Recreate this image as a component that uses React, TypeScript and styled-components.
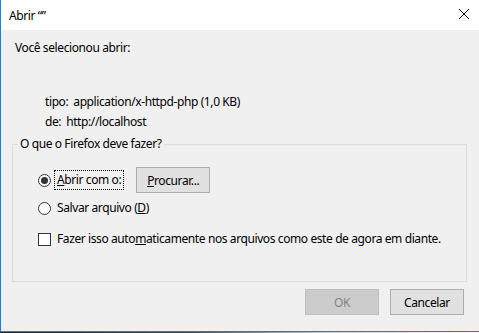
import styled, { createGlobalStyle } from 'styled-components'

const GlobalStyle = createGlobalStyle`
  html, body {
    margin: 0;
    padding: 0;
    background: #1d2a36;
  }
  body {
    font-family: 'Noto Sans', 'Open Sans', sans-serif;
    font-size: 12px;
    letter-spacing: -0.4px;
    color: #000;
  }
`

const Screen = styled.div`
  width: 479px;
  height: 333px;
  display: flex;
  flex-direction: column;
  overflow: hidden;
  background: linear-gradient(90deg, #1a2530 0%, #3a4a58 40%, #cfd8e0 70%, #f4f6f8 100%);
`

const Window = styled.div`
  height: 332px;
  display: flex;
  flex-direction: column;
  border-left: 1px solid #1f7fd4;
  border-bottom: 1px solid #1f7fd4;
  background: #f0f0f0;
  box-sizing: border-box;
`

const TitleBar = styled.div`
  height: 30px;
  flex: none;
  display: flex;
  align-items: center;
  justify-content: space-between;
  background: #fff;
  padding-left: 8px;
`

const Title = styled.span`
  font-size: 12px;
`

const CloseButton = styled.span`
  width: 30px;
  display: flex;
  justify-content: center;
  align-items: center;
  margin-top: -2px;
`

const Body = styled.div`
  flex: 1;
  display: flex;
  flex-direction: column;
  padding: 10px 12px 0 11px;
`

const Intro = styled.div`
  line-height: 16px;
  padding-left: 3px;
`

const Info = styled.div`
  margin-top: 36px;
  padding-left: 33px;
  display: flex;
  flex-direction: column;
`

const InfoRow = styled.div`
  display: flex;
  gap: 5px;
  line-height: 20px;
`

const GroupBox = styled.fieldset`
  margin: 4px 0 0;
  padding: 0;
  height: 146px;
  box-sizing: border-box;
  border: 1px solid #dcdcdc;
  min-width: 0;
`

const GroupLabel = styled.legend`
  padding: 0 2px;
  margin-left: 5px;
  line-height: 16px;
`

const Options = styled.div`
  display: flex;
  flex-direction: column;
  padding: 15px 0 0 25px;
`

const OptionRow = styled.div<{ $gap?: number }>`
  display: flex;
  align-items: center;
  height: 26px;
  margin-top: ${(p) => p.$gap ?? 0}px;
`

const Radio = styled.span<{ $checked?: boolean }>`
  width: 13px;
  height: 13px;
  border: 1px solid #333;
  border-radius: 50%;
  box-sizing: border-box;
  background: #fff;
  display: flex;
  align-items: center;
  justify-content: center;
  flex: none;

  &::after {
    content: '';
    width: 7px;
    height: 7px;
    border-radius: 50%;
    background: ${(p) => (p.$checked ? '#333' : 'transparent')};
  }
`

const Checkbox = styled.span`
  width: 13px;
  height: 13px;
  border: 1px solid #333;
  box-sizing: border-box;
  background: #fff;
  flex: none;
`

const Label = styled.span<{ $focused?: boolean }>`
  margin-left: ${(p) => (p.$focused ? '3px' : '6px')};
  padding: ${(p) => (p.$focused ? '1px 2px' : '0')};
  border: ${(p) => (p.$focused ? '1px dotted #000' : 'none')};
  line-height: 16px;
  white-space: nowrap;
`

const U = styled.span`
  text-decoration: underline;
`

const Button = styled.button<{ $disabled?: boolean }>`
  width: 74px;
  height: 26px;
  box-sizing: border-box;
  font-family: inherit;
  font-size: 12px;
  letter-spacing: inherit;
  padding: 0;
  background: ${(p) => (p.$disabled ? '#cccccc' : '#e1e1e1')};
  border: 1px solid ${(p) => (p.$disabled ? '#bfbfbf' : '#adadad')};
  color: ${(p) => (p.$disabled ? '#838383' : '#000')};
`

const BrowseButton = styled(Button)`
  margin-left: 12px;
`

const Footer = styled.div`
  display: flex;
  justify-content: flex-end;
  gap: 11px;
  margin-top: 7px;
  padding-right: 3px;
`

function CloseIcon() {
  return (
    <svg width="12" height="12" viewBox="0 0 12 12">
      <path d="M1 1 L11 11 M11 1 L1 11" stroke="#000" strokeWidth="1" />
    </svg>
  )
}

export default function App() {
  return (
    <>
      <GlobalStyle />
      <Screen>
        <Window>
          <TitleBar>
            <Title>Abrir “”</Title>
            <CloseButton>
              <CloseIcon />
            </CloseButton>
          </TitleBar>
          <Body>
            <Intro>Você selecionou abrir:</Intro>
            <Info>
              <InfoRow>
                <span>tipo:</span>
                <span>application/x-httpd-php (1,0 KB)</span>
              </InfoRow>
              <InfoRow>
                <span>de:</span>
                <span>http://localhost</span>
              </InfoRow>
            </Info>
            <GroupBox>
              <GroupLabel>O que o Firefox deve fazer?</GroupLabel>
              <Options>
                <OptionRow>
                  <Radio $checked />
                  <Label $focused>
                    <U>A</U>brir com o:
                  </Label>
                  <BrowseButton>
                    <U>P</U>rocurar...
                  </BrowseButton>
                </OptionRow>
                <OptionRow $gap={2}>
                  <Radio />
                  <Label>
                    Salvar arquivo (<U>D</U>)
                  </Label>
                </OptionRow>
                <OptionRow $gap={5}>
                  <Checkbox />
                  <Label>
                    Fazer isso auto<U>m</U>aticamente nos arquivos como este de agora em diante.
                  </Label>
                </OptionRow>
              </Options>
            </GroupBox>
            <Footer>
              <Button $disabled>OK</Button>
              <Button>Cancelar</Button>
            </Footer>
          </Body>
        </Window>
      </Screen>
    </>
  )
}
